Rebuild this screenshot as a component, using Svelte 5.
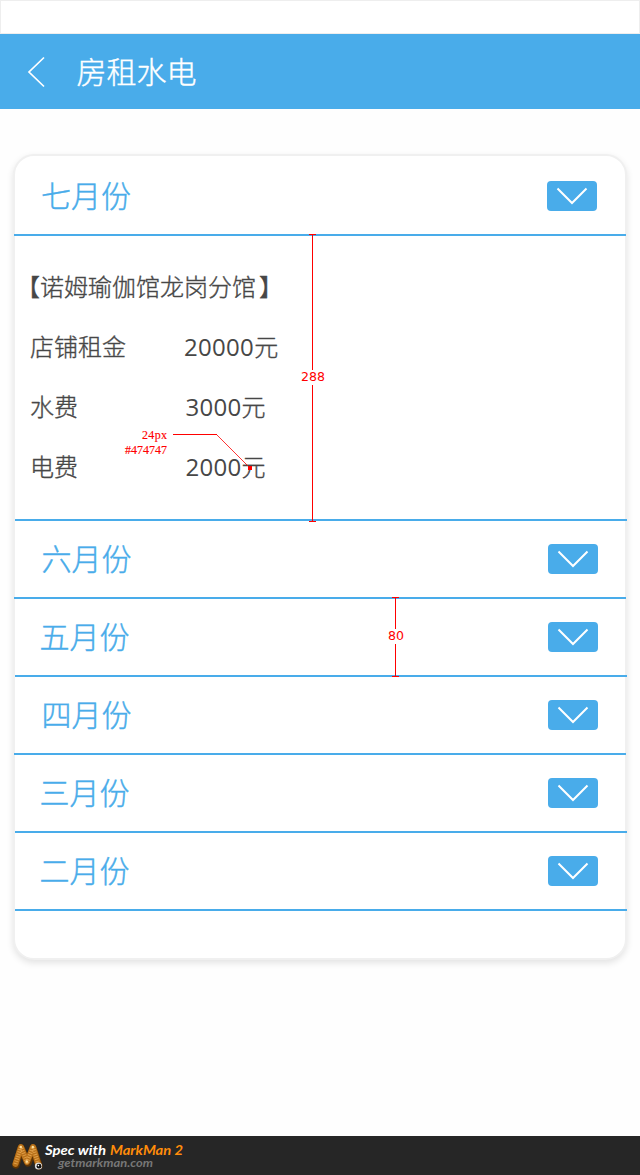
<script>
  const bills = [
    { name: '店铺租金', value: '20000元', x: 154 },
    { name: '水费', value: '3000元', x: 155.5 },
    { name: '电费', value: '2000元', x: 155.5 }
  ];
  const months = [
    { label: '六月份', x: 26.5, wide: true },
    { label: '五月份', x: 24.5, wide: false },
    { label: '四月份', x: 26.5, wide: true },
    { label: '三月份', x: 24.5, wide: false },
    { label: '二月份', x: 24.5, wide: false }
  ];
</script>

{#snippet toggle()}
  <button class="toggle" aria-label="展开">
    <svg width="50" height="30" viewBox="0 0 50 30"><path d="M10.5 7.5 25 22 39.5 7.5" fill="none" stroke="#fff" stroke-width="2" /></svg>
  </button>
{/snippet}

<div class="page">
  <div class="status"></div>
  <header>
    <svg class="back" width="20" height="32" viewBox="0 0 20 32"><path d="M17 1.5 2 16 17 30.5" fill="none" stroke="#fff" stroke-width="1.7" /></svg>
    <h1>房租水电</h1>
  </header>

  <main>
    <section class="month first">
      <h2>七月份</h2>
      {@render toggle()}
    </section>
    <section class="detail">
      <div class="branch">【诺姆瑜伽馆龙岗分馆<span class="close">】</span></div>
      {#each bills as bill}
        <div class="bill">
          <span class="name" style="width: {bill.x}px">{bill.name}</span>
          <span><span class="num">{bill.value.slice(0, -1)}</span>{bill.value.slice(-1)}</span>
        </div>
      {/each}
    </section>
    {#each months as month}
      <section class="month" class:wide={month.wide}>
        <h2 style="padding-left: {month.x}px">{month.label}</h2>
        {@render toggle()}
      </section>
    {/each}
  </main>

  <footer>
    <svg class="logo" width="32" height="30" viewBox="0 0 32 30">
      <g fill="none" stroke-linecap="round" stroke-linejoin="round">
        <path d="M4 23 9 6 16 21 21 6 27 24" stroke="#5f3404" stroke-width="7.4" />
        <path d="M3.5 22 9 5 15 20 21 5 26.5 23" stroke="#b87019" stroke-width="6" />
        <path d="M3.5 22 9 5 15 20 21 5 26.5 23" stroke="#e0a04a" stroke-width="4" stroke-linecap="butt" stroke-dasharray="1 1.4" />
      </g>
      <circle cx="8.8" cy="5" r="1.2" fill="#ffe2a0" /><circle cx="20.8" cy="5" r="1.2" fill="#ffe2a0" /><circle cx="14.8" cy="19.5" r="1.2" fill="#ffe2a0" />
      <circle cx="26.5" cy="24" r="3.6" fill="#ddd" /><circle cx="27" cy="24.2" r="2.4" fill="#111" /><circle cx="26.4" cy="23.6" r=".8" fill="#fff" />
    </svg>
    <svg class="credit" width="160" height="39" viewBox="0 0 160 39">
      <text class="spec" x="1" y="18.5" textLength="61" lengthAdjust="spacingAndGlyphs">Spec with</text>
      <text class="spec brand" x="66" y="18.5" textLength="73" lengthAdjust="spacingAndGlyphs">MarkMan 2</text>
      <text class="site" x="14" y="30.5" textLength="95" lengthAdjust="spacingAndGlyphs">getmarkman.com</text>
    </svg>
  </footer>

  <svg class="marks" width="640" height="1175" viewBox="0 0 640 1175">
    <g fill="#f00" shape-rendering="crispEdges">
      <rect x="309" y="234" width="7" height="1" /><rect x="312" y="234" width="1" height="136" />
      <rect x="312" y="385" width="1" height="136" /><rect x="309" y="521" width="7" height="1" />
      <rect x="392" y="597" width="7" height="1" /><rect x="395" y="597" width="1" height="32" />
      <rect x="395" y="644" width="1" height="32" /><rect x="392" y="676" width="7" height="1" />
      <rect x="173" y="434" width="44" height="1" /><rect x="248" y="466" width="4" height="4" />
    </g>
    <path d="M216.5 434.5 250 468" stroke="#f00" stroke-width=".8" fill="none" />
    <text class="size" x="301" y="381" textLength="24" lengthAdjust="spacingAndGlyphs">288</text>
    <text class="size" x="388" y="640" textLength="16" lengthAdjust="spacingAndGlyphs">80</text>
    <text class="tag" x="142" y="439" textLength="25">24px</text>
    <text class="tag" x="125" y="454" textLength="42">#474747</text>
  </svg>
</div>

<style>
  :global(body) { background: #fff; }
  .page {
    position: relative;
    display: flex;
    flex-direction: column;
    width: 640px;
    height: 1175px;
    overflow: hidden;
    background: #fefefe;
    font-family: 'Noto Sans CJK SC', sans-serif;
    font-weight: 300;
  }
  .status { box-sizing: border-box; height: 34px; border: 1px solid #eee; background: #fff; }
  header { display: flex; align-items: center; height: 75px; padding-left: 27px; background: #49acea; }
  h1, h2 { margin: 0; font-size: 30px; font-weight: 300; line-height: 40px; -webkit-text-stroke: 0.4px currentColor; }
  h1 { margin-left: 29.5px; padding-bottom: 4px; color: #fff; }
  h2 { padding-bottom: 4px; }
  main {
    box-sizing: border-box;
    width: 614px;
    height: 806px;
    margin: 45px 0 0 13px;
    border: 2px solid #f0f0f0;
    border-radius: 21px;
    background: #fff;
    box-shadow: 0 3px 7px rgba(0, 0, 0, 0.11);
  }
  .month {
    box-sizing: border-box;
    display: flex;
    align-items: center;
    justify-content: space-between;
    width: 612px;
    height: 78px;
    padding-right: 29px;
    border-bottom: 2px solid #49acea;
    color: #49acea;
  }
  .first { height: 80px; margin-left: -1px; padding-top: 2px; padding-left: 27px; }
  .wide { margin-left: -1px; padding: 0 28px 0 1px; }
  .toggle { display: block; width: 50px; height: 30px; padding: 0; border: 0; border-radius: 4px; background: #49acea; }
  .toggle svg { display: block; }
  .detail {
    box-sizing: border-box;
    width: 612px;
    height: 285px;
    padding-top: 20px;
    border-bottom: 2px solid #49acea;
    color: #474747;
    font-size: 24px;
    line-height: 60px;
    -webkit-text-stroke: 0.35px currentColor;
  }
  .branch { height: 60px; padding-left: 1px; }
  .close { margin-left: 3px; }
  .bill { display: flex; height: 60px; padding-left: 15px; }
  .name { flex: none; }
  .num { font-family: 'Open Sans', sans-serif; font-weight: 400; letter-spacing: 0.3px; -webkit-text-stroke: 0; }
  footer { display: flex; height: 39px; margin-top: auto; padding-left: 12px; background: #262626; }
  .logo { margin-top: 6px; }
  .spec { fill: #fff; font: italic 700 13px Lato, sans-serif; }
  .brand { fill: #ff8c0a; }
  .site { fill: #777; font: italic 700 11px Lato, sans-serif; }
  .marks { position: absolute; inset: 0; pointer-events: none; }
  .size { fill: #f00; font: 12.5px 'DejaVu Sans', sans-serif; }
  .tag { fill: #f00; stroke: #f00; stroke-width: 0.15px; font: 400 12px 'Liberation Serif', serif; }
</style>
